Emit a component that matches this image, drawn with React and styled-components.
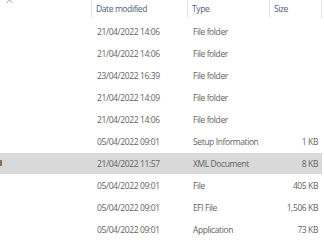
import React from "react";
import styled, { createGlobalStyle } from "styled-components";

const GlobalStyle = createGlobalStyle`
  html, body {
    margin: 0;
    padding: 0;
    background: #ffffff;
    overflow: hidden;
  }
  body {
    font-family: "Open Sans", "Noto Sans", sans-serif;
  }
`;

const files = [
  { date: "21/04/2022 14:06", type: "File folder", size: "" },
  { date: "21/04/2022 14:06", type: "File folder", size: "" },
  { date: "23/04/2022 16:39", type: "File folder", size: "" },
  { date: "21/04/2022 14:09", type: "File folder", size: "" },
  { date: "21/04/2022 14:06", type: "File folder", size: "" },
  { date: "05/04/2022 09:01", type: "Setup Information", size: "1 KB" },
  { date: "21/04/2022 11:57", type: "XML Document", size: "8 KB", selected: true },
  { date: "05/04/2022 09:01", type: "File", size: "405 KB" },
  { date: "05/04/2022 09:01", type: "EFI File", size: "1,506 KB" },
  { date: "05/04/2022 09:01", type: "Application", size: "73 KB" },
];

const COLUMNS = "92px 96px 82px 52px";

export default function App() {
  return (
    <>
      <GlobalStyle />
      <Explorer>
        <Header>
          <NameHead>
            <SortArrow width="7" height="5" viewBox="0 0 7 5">
              <path d="M0.5 4 L3.5 1 L6.5 4" fill="none" stroke="#a0a0a0" strokeWidth="1" />
            </SortArrow>
          </NameHead>
          <HeadCell>Date modified</HeadCell>
          <HeadCell>Type</HeadCell>
          <HeadCell>Size</HeadCell>
        </Header>
        {files.map((f, i) => (
          <Row key={i}>
            <RowBand $selected={f.selected}>
              <NameCell>{f.selected && <NameTail />}</NameCell>
              <Cell>{f.date}</Cell>
              <Cell>{f.type}</Cell>
              <Cell $right>{f.size}</Cell>
            </RowBand>
          </Row>
        ))}
      </Explorer>
    </>
  );
}

const Explorer = styled.div`
  width: 324px;
  height: 243px;
  display: flex;
  flex-direction: column;
`;

const Header = styled.div`
  display: grid;
  grid-template-columns: ${COLUMNS};
  height: 20px;
  flex-shrink: 0;
`;

const NameHead = styled.div`
  position: relative;
  border-right: 1px solid #e5e5e5;
  height: 18px;
`;

const SortArrow = styled.svg`
  position: absolute;
  left: 6px;
  top: -1px;
`;

const HeadCell = styled.div`
  height: 18px;
  border-right: 1px solid #e5e5e5;
  padding-left: 4px;
  font-size: 8.5px;
  letter-spacing: -0.4px;
  line-height: 18px;
  color: #4c607a;
  white-space: nowrap;
`;

const Row = styled.div`
  height: 22px;
  flex-shrink: 0;
  display: flex;
  align-items: center;
`;

const RowBand = styled.div`
  display: grid;
  grid-template-columns: ${COLUMNS};
  align-items: center;
  width: 322px;
  height: 21px;
  background: ${(p) => (p.$selected ? "#d9d9d9" : "transparent")};
`;

const NameCell = styled.div`
  display: flex;
  align-items: center;
`;

const NameTail = styled.span`
  width: 2px;
  height: 6px;
  background: #8a6f58;
`;

const Cell = styled.div`
  font-size: 8.5px;
  letter-spacing: -0.4px;
  color: #636363;
  white-space: nowrap;
  padding: ${(p) => (p.$right ? "0 4px 0 0" : "0 0 0 5px")};
  text-align: ${(p) => (p.$right ? "right" : "left")};
`;
